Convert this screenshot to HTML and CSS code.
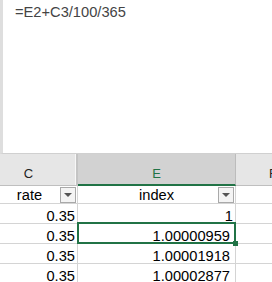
FILE: index.html
```html
<!DOCTYPE html>
<html>
<head>
<meta charset="utf-8">
<link rel="stylesheet" href="styles.css">
</head>
<body>
<div class="formula">=E2+C3/100/365</div>
<div class="sheet">
  <div class="colheads">
    <div class="ch col-c">C</div>
    <div class="ch-split"></div>
    <div class="ch col-e sel">E</div>
    <div class="ch col-f">F</div>
  </div>
  <div class="row head">
    <div class="cell col-c">rate<span class="filter"></span></div>
    <div class="cell col-e">index<span class="filter"></span></div>
    <div class="cell col-f"></div>
  </div>
  <div class="row">
    <div class="cell col-c num">0.35</div>
    <div class="cell col-e num">1</div>
    <div class="cell col-f"></div>
  </div>
  <div class="row">
    <div class="cell col-c num">0.35</div>
    <div class="cell col-e num dec">1.00000959</div>
    <div class="cell col-f"></div>
  </div>
  <div class="row">
    <div class="cell col-c num">0.35</div>
    <div class="cell col-e num dec">1.00001918</div>
    <div class="cell col-f"></div>
  </div>
  <div class="row">
    <div class="cell col-c num">0.35</div>
    <div class="cell col-e num dec">1.00002877</div>
    <div class="cell col-f"></div>
  </div>
  <div class="selection"><span class="handle"></span></div>
</div>
</body>
</html>
```

FILE: styles.css
```css
html, body {
  margin: 0;
  padding: 0;
}
body {
  width: 272px;
  height: 282px;
  overflow: hidden;
  background: #fff;
  font-family: "Liberation Sans", Arial, sans-serif;
  color: #000;
}
.formula {
  height: 151px;
  padding: 2px 0 0 12px;
  border-left: 3px solid #dedede;
  border-bottom: 1px solid #d0d0d0;
  font-size: 14.67px;
  line-height: 20px;
  color: #444;
}
.sheet {
  position: relative;
  margin-left: -18px;
  width: 290px;
  overflow: hidden;
}
.colheads {
  display: flex;
  height: 32px;
  background: #e6e6e6;
}
.ch {
  box-sizing: border-box;
  height: 32px;
  display: flex;
  align-items: flex-end;
  justify-content: center;
  padding-bottom: 3px;
  font-size: 13px;
  line-height: 16px;
  color: #222;
  border-bottom: 1px solid #bfbfbf;
}
.ch.col-c { width: 93px; }
.ch-split {
  width: 1px;
  height: 31px;
  background: #f7f7f7;
  border-right: 2px solid #c4c4c4;
  border-bottom: 1px solid #bfbfbf;
}
.ch.col-e {
  width: 158px;
  border-right: 1px solid #bcbcbc;
}
.ch.sel {
  background: #d2d2d2;
  color: #217346;
  border-bottom: 2px solid #217346;
  padding-bottom: 2px;
}
.ch.col-f {
  flex: 1;
  min-width: 0;
  justify-content: flex-start;
  padding-left: 33px;
  overflow: hidden;
}

.row {
  display: flex;
  height: 20px;
  box-sizing: border-box;
  border-bottom: 1px solid #d4d4d4;
}
.row.head { height: 18px; }
.cell {
  position: relative;
  box-sizing: border-box;
  height: 100%;
  display: flex;
  align-items: flex-end;
  justify-content: center;
  font-size: 14.67px;
  line-height: 14px;
  border-right: 1px solid #d4d4d4;
  white-space: nowrap;
}
.head .cell { padding-bottom: 1px; }
.cell.col-c { width: 96px; }
.cell.col-e { width: 158px; }
.cell.col-f { flex: 1; min-width: 0; border-right: none; }
.cell.num {
  justify-content: flex-end;
  padding-right: 2px;
}
.cell.dec { padding-right: 5px; }

.filter {
  position: absolute;
  right: 1px;
  top: 1px;
  width: 14px;
  height: 14px;
  border: 1px solid #a9a9a9;
  background: #f4f4f4;
}
.filter::after {
  content: "";
  position: absolute;
  left: 3px;
  top: 5px;
  border-left: 4px solid transparent;
  border-right: 4px solid transparent;
  border-top: 4px solid #555;
}

.selection {
  position: absolute;
  left: 95px;
  top: 68px;
  width: 155px;
  height: 18px;
  border: 2px solid #217346;
}
.handle {
  position: absolute;
  right: -4px;
  bottom: -4px;
  width: 5px;
  height: 5px;
  background: #217346;
}
```
